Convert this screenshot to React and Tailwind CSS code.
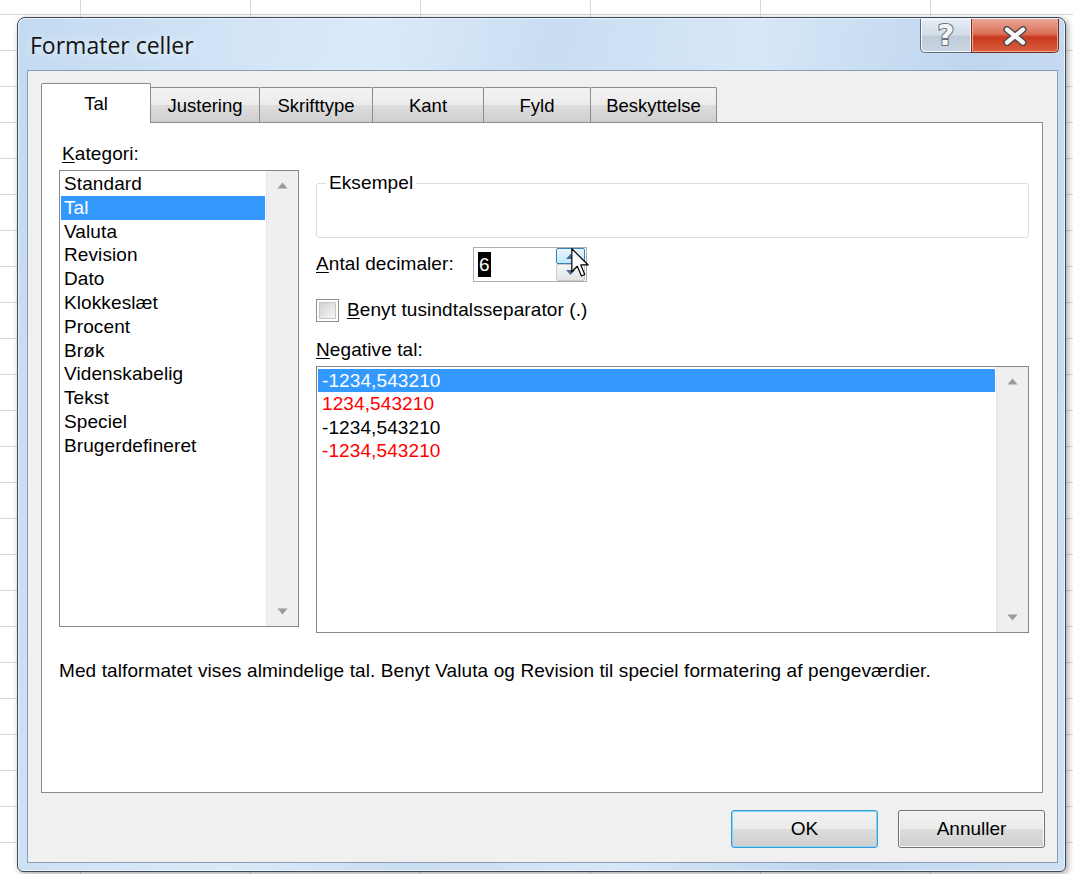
import { useState } from 'react'

const categories = [
  'Standard',
  'Tal',
  'Valuta',
  'Revision',
  'Dato',
  'Klokkeslæt',
  'Procent',
  'Brøk',
  'Videnskabelig',
  'Tekst',
  'Speciel',
  'Brugerdefineret',
]

const negatives = [
  { text: '-1234,543210', red: false },
  { text: '1234,543210', red: true },
  { text: '-1234,543210', red: false },
  { text: '-1234,543210', red: true },
]

const tabs = [
  { name: 'Tal', w: 'w-[110px]' },
  { name: 'Justering', w: 'w-[110px]' },
  { name: 'Skrifttype', w: 'w-[114px]' },
  { name: 'Kant', w: 'w-[112px]' },
  { name: 'Fyld', w: 'w-[108px]' },
  { name: 'Beskyttelse', w: 'w-[127px]' },
]

function Arrow({ up }) {
  return (
    <svg width="11" height="7" viewBox="0 0 11 7">
      <path d={up ? 'M0.5 6.5 L5.5 0.5 L10.5 6.5 Z' : 'M0.5 0.5 L5.5 6.5 L10.5 0.5 Z'} fill="#9a9a9a" />
    </svg>
  )
}

function ScrollBar() {
  return (
    <div className="w-[32px] h-full bg-[#efefef] border-l border-[#e6e6e6] flex flex-col items-center justify-between py-[11px]">
      <Arrow up />
      <Arrow />
    </div>
  )
}

function Tab({ name, w, active, first, onClick }) {
  if (active) {
    return (
      <button
        onClick={onClick}
        className={`${w} h-[40px] relative z-10 -mb-px bg-white border border-b-0 border-[#898c95] rounded-t-[2px] text-[18.5px] leading-[36px] text-black`}
      >
        {name}
      </button>
    )
  }
  return (
    <button
      onClick={onClick}
      className={`${w} h-[35px] ${first ? '' : '-ml-px'} bg-[linear-gradient(to_bottom,#f3f3f3_0%,#ebebeb_50%,#dddddd_51%,#cfcfcf_100%)] border border-b-0 border-[#898c95] rounded-t-[2px] text-[18.5px] leading-[33px] text-black`}
    >
      {name}
    </button>
  )
}

function WinButton({ children, focused }) {
  return (
    <button
      className={`w-[147px] h-[38px] rounded-[3px] border text-[19px] text-black bg-[linear-gradient(to_bottom,#f2f2f2_0%,#ebebeb_49%,#dddddd_50%,#cfcfcf_100%)] ${
        focused
          ? 'border-[#3c9ad6] shadow-[inset_0_0_0_1px_#7fd6f5]'
          : 'border-[#707070] shadow-[inset_0_0_0_1px_#fbfbfb]'
      }`}
    >
      {children}
    </button>
  )
}

function TitleBar() {
  return (
    <div className="h-[52px] flex items-start justify-between">
      <div className="pl-[12px] pt-[12px] text-[23px] leading-[30px] text-[#141414] font-['Open_Sans','Noto_Sans',sans-serif] [text-shadow:0_0_8px_#ffffff]">
        Formater celler
      </div>
      <div className="flex mr-[6px] mt-[1px]">
        <div className="w-[52px] h-[34px] rounded-bl-[5px] border border-t-0 border-[#5f6f80] bg-[linear-gradient(to_bottom,#e6edf4_0%,#d3dde8_48%,#bfcbd8_52%,#c9d5e2_100%)] shadow-[inset_0_0_0_1px_#f3f7fb] flex items-center justify-center">
          <span className="text-[29px] leading-none font-bold text-[#f4f5f7] font-['DejaVu_Sans',sans-serif] [-webkit-text-stroke:2px_#68717b] [paint-order:stroke_fill]">
            ?
          </span>
        </div>
        <div className="w-[88px] h-[34px] -ml-px rounded-br-[5px] border border-t-0 border-[#7a2c1e] bg-[linear-gradient(to_bottom,#e9a897_0%,#db6f57_45%,#c8391d_55%,#d9603f_100%)] shadow-[inset_0_0_0_1px_#eea694] flex items-center justify-center">
          <svg width="26" height="20" viewBox="0 0 26 20">
            <path d="M5 3.5 L21 16.5 M21 3.5 L5 16.5" stroke="#4a4a4a" strokeWidth="7" strokeLinecap="round" />
            <path d="M5 3.5 L21 16.5 M21 3.5 L5 16.5" stroke="#f7f7f7" strokeWidth="4.2" strokeLinecap="round" />
          </svg>
        </div>
      </div>
    </div>
  )
}

export default function App() {
  const [tab, setTab] = useState('Tal')
  const [category, setCategory] = useState('Tal')
  const [negative, setNegative] = useState(0)
  const [thousands, setThousands] = useState(false)

  return (
    <div className="w-[1073px] h-[874px] overflow-hidden bg-white bg-[linear-gradient(to_right,#d8d8d8_1px,transparent_1px),linear-gradient(to_bottom,#d8d8d8_1px,transparent_1px)] bg-[size:170px_36px] bg-[position:80px_14px] pt-[17px] pl-[17px] font-['Liberation_Sans',Arial,sans-serif]">
      <div className="w-[1049px] h-[855px] flex flex-col rounded-t-[8px] rounded-b-[6px] border border-[#3d4957] bg-[linear-gradient(100deg,#c3daf1_0%,#dbeaf9_30%,#c9ddf2_45%,#d6e7f7_62%,#bfd6ee_80%,#cfe1f4_100%)] shadow-[inset_0_0_0_1px_#eaf3fc,2px_2px_6px_rgba(0,0,0,0.35)]">
        <TitleBar />

        <div className="flex-1 ml-[9px] mr-[7px] mb-[8px] border border-[#8b9cb0] bg-[#f0f0f0] flex flex-col">
          {/* tab strip */}
          <div className="h-[51px] flex items-end pl-[13px]">
            {tabs.map((t, i) => (
              <Tab
                key={t.name}
                name={t.name}
                w={t.w}
                first={i === 0}
                active={tab === t.name}
                onClick={() => setTab(t.name)}
              />
            ))}
          </div>

          {/* tab page */}
          <div className="ml-[13px] mr-[14px] h-[671px] bg-white border border-[#898c95] flex flex-col text-[19px] tracking-[0.1px] text-black">
            <div className="flex">
              <div className="ml-[17px] w-[240px] mt-[20px]">
                <div className="pl-[3px] h-[22px] leading-[22px] mb-[5px]">
                  <u className="underline-offset-2">K</u>ategori:
                </div>
                <div className="h-[457px] border border-[#828790] flex">
                  <div className="flex-1 pt-[1px] px-[1px]">
                    {categories.map((c) => (
                      <div
                        key={c}
                        onClick={() => setCategory(c)}
                        className={`h-[23.8px] leading-[23.8px] pl-[3px] ${
                          category === c ? 'bg-[#3399ff] text-white' : ''
                        }`}
                      >
                        {c}
                      </div>
                    ))}
                  </div>
                  <ScrollBar />
                </div>
              </div>

              <div className="ml-[17px] w-[713px] mt-[49px]">
                <fieldset className="h-[66px] border border-[#d5dfe5] rounded-[3px]">
                  <legend className="ml-[9px] px-[3px] leading-[22px]">Eksempel</legend>
                </fieldset>

                <div className="mt-[9px] flex items-center">
                  <div className="w-[157px]">
                    <u className="underline-offset-2">A</u>ntal decimaler:
                  </div>
                  <div className="relative w-[114px] h-[35px] border border-[#abadb3] flex items-center bg-white">
                    <span className="ml-[4px] px-[1px] bg-black text-white leading-[25px]">6</span>
                    <div className="ml-auto mr-[1px] w-[29px] h-[33px] flex flex-col">
                      <div className="h-[16px] border border-[#3c7fb1] rounded-[2px] bg-[linear-gradient(to_bottom,#eaf6fd,#bee6fd)] flex items-center justify-center">
                        <svg width="9" height="5" viewBox="0 0 9 5">
                          <path d="M0 5 L4.5 0 L9 5 Z" fill="#4a6a9a" />
                        </svg>
                      </div>
                      <div className="h-[17px] border border-[#c9c9c9] rounded-[2px] bg-[linear-gradient(to_bottom,#f5f5f5,#e3e3e3)] flex items-center justify-center">
                        <svg width="9" height="5" viewBox="0 0 9 5">
                          <path d="M0 0 L4.5 5 L9 0 Z" fill="#4a6a9a" />
                        </svg>
                      </div>
                    </div>
                    {/* mouse pointer resting on the spin button */}
                    <svg
                      className="absolute left-[97px] top-[0px]"
                      width="18"
                      height="29"
                      viewBox="0 0 12 19.5"
                    >
                      <path
                        d="M0.5 0.5 L0.5 16 L4.2 12.3 L7 18.8 L9.2 17.8 L6.5 11.4 L11.5 11.4 Z"
                        fill="#ffffff"
                        stroke="#000000"
                        strokeWidth="0.8"
                        strokeLinejoin="round"
                      />
                    </svg>
                  </div>
                </div>

                <label className="mt-[14px] flex items-center cursor-default">
                  <span
                    onClick={() => setThousands(!thousands)}
                    className="w-[23px] h-[23px] border border-[#8e8f8f] bg-white p-[2px] flex"
                  >
                    <span className="flex-1 border border-[#c6c6c6] bg-[linear-gradient(135deg,#d2d2d2,#f6f6f6)] flex items-center justify-center text-[14px] leading-none">
                      {thousands ? '✓' : ''}
                    </span>
                  </span>
                  <span className="ml-[8px]">
                    <u className="underline-offset-2">B</u>enyt tusindtalsseparator (.)
                  </span>
                </label>

                <div className="mt-[14px] h-[22px] leading-[22px]">
                  <u className="underline-offset-2">N</u>egative tal:
                </div>
                <div className="mt-[5px] h-[267px] border border-[#828790] flex">
                  <div className="flex-1 pt-[2px] px-[1px]">
                    {negatives.map((n, i) => (
                      <div
                        key={i}
                        onClick={() => setNegative(i)}
                        className={`h-[23.6px] leading-[23.6px] pl-[4px] ${
                          negative === i
                            ? 'bg-[#3399ff] text-white'
                            : n.red
                              ? 'text-[#ff0000]'
                              : 'text-black'
                        }`}
                      >
                        {n.text}
                      </div>
                    ))}
                  </div>
                  <ScrollBar />
                </div>
              </div>
            </div>

            <div className="mt-[27px] pl-[17px] leading-[22px]">
              Med talformatet vises almindelige tal. Benyt Valuta og Revision til speciel formatering af pengeværdier.
            </div>
          </div>

          {/* dialog buttons */}
          <div className="mt-[17px] flex justify-end gap-[20px] pr-[12px]">
            <WinButton focused>OK</WinButton>
            <WinButton>Annuller</WinButton>
          </div>
        </div>
      </div>
    </div>
  )
}
